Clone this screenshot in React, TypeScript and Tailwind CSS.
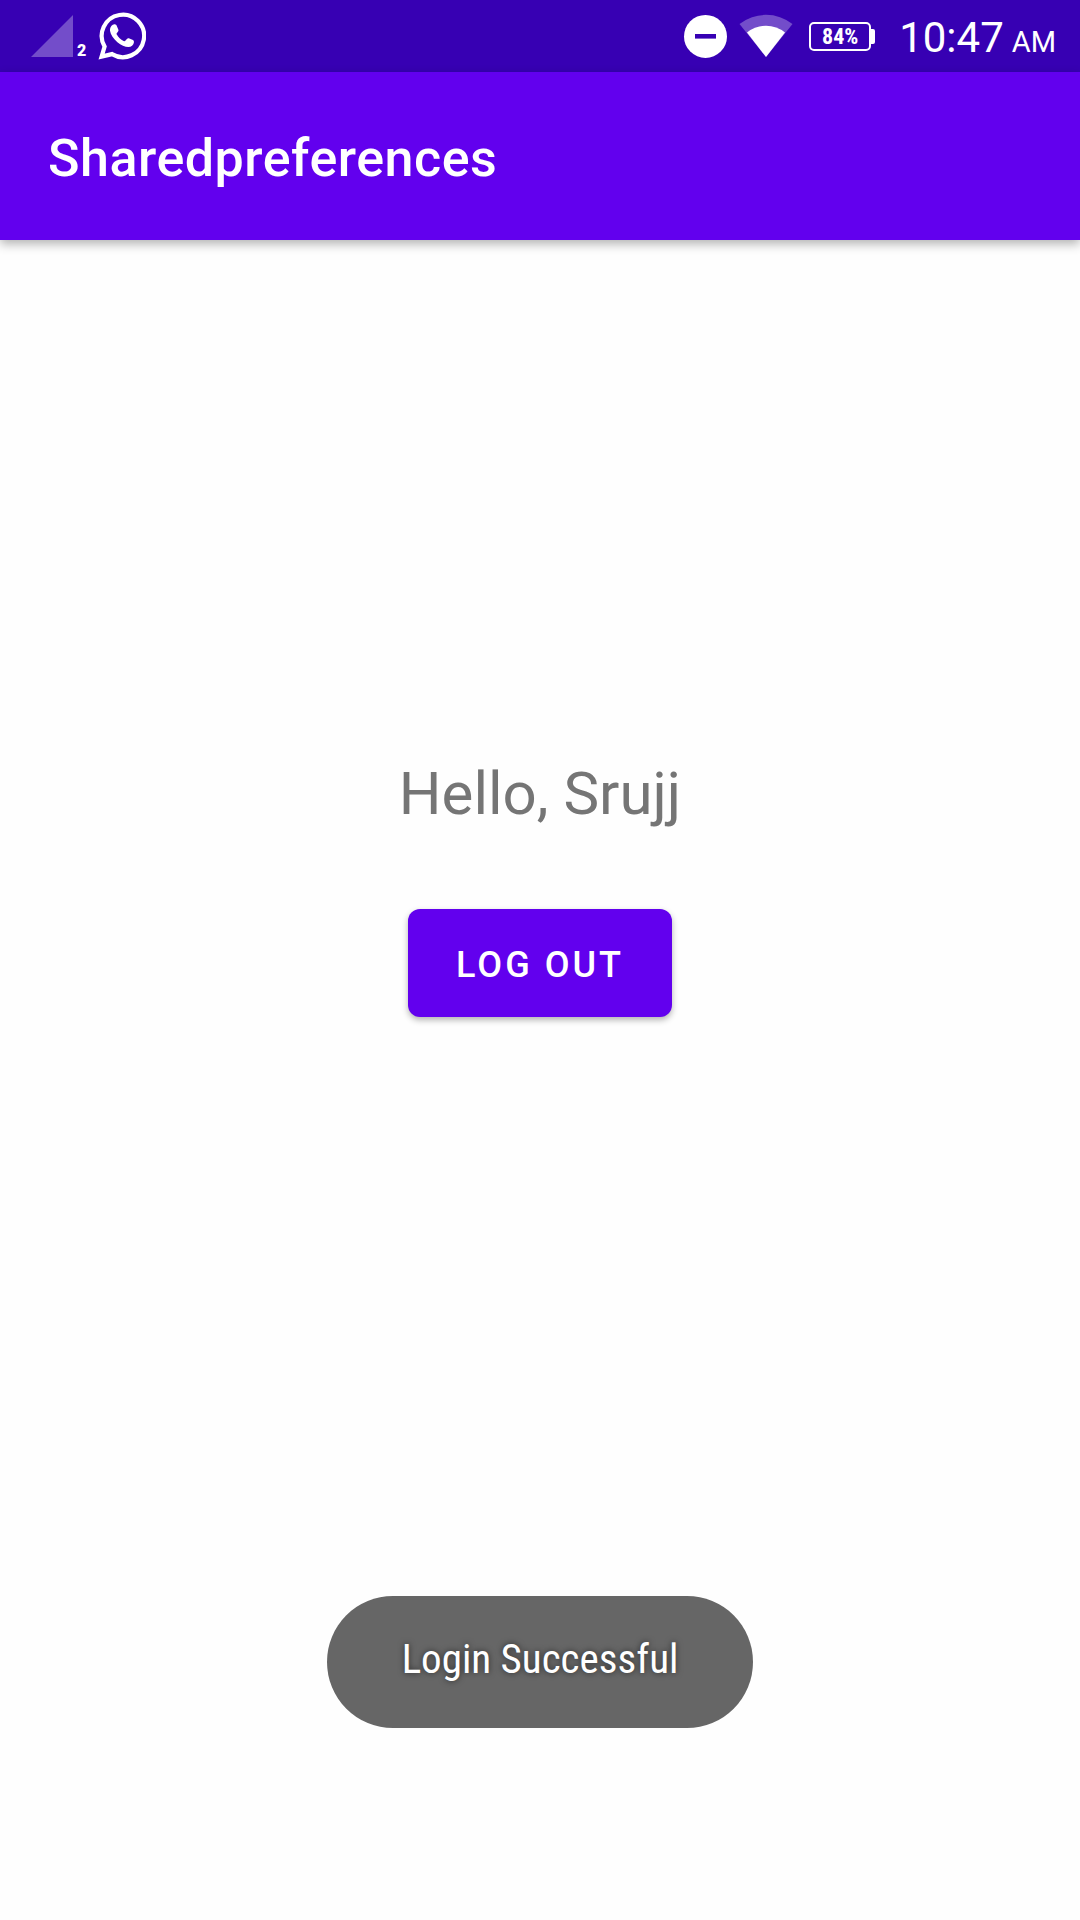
function SignalIcon() {
  return (
    <svg viewBox="0 0 42 42" className="h-[42px] w-[42px]" aria-hidden="true">
      <path d="M42 0V42H0Z" fill="#fff" fillOpacity="0.3" />
    </svg>
  );
}

function WhatsAppIcon() {
  return (
    <svg viewBox="0 0 48 48" className="h-12 w-12" aria-hidden="true">
      <path
        d="M3.6 44.6L6.6 34.6A21.2 21.2 0 1 1 14 42.1Z"
        fill="none"
        stroke="#fff"
        strokeWidth="4.2"
        strokeLinejoin="miter"
      />
      <path
        d="M14.8 12.8C12.9 14 11.7 16.2 12 18.8C12.6 23 15.6 27 19.4 30.2C23 33.2 27 35 30.4 35C33.2 34.9 35.6 33 35.9 30.4C36 29.3 35.8 28.6 35 28.1L31.4 26.4C30.3 25.9 29.6 26.1 28.9 26.9L27.3 28.8C26.8 29.3 26.3 29.4 25.6 29C22.6 27.5 20.3 25.2 18.8 22.5C18.4 21.8 18.5 21.4 19 20.9L20.2 19.3C20.6 18.7 20.6 18.2 20.3 17.5L18.7 13.8C18.3 12.8 17.8 12.4 16.9 12.3C16 12.2 15.4 12.4 14.8 12.8Z"
        fill="#fff"
      />
    </svg>
  );
}

function DoNotDisturbIcon() {
  return (
    <svg viewBox="0 0 44 44" className="h-11 w-11" aria-hidden="true">
      <circle cx="22.5" cy="22.4" r="21.5" fill="#fff" />
      <rect x="12" y="20" width="21" height="4.6" fill="#3700b3" />
    </svg>
  );
}

function WifiIcon() {
  return (
    <svg viewBox="0 0 54 44" className="h-11 w-[54px]" aria-hidden="true">
      <path d="M0.5 10A43 43 0 0 1 53.5 10L27 43Z" fill="#fff" fillOpacity="0.3" />
      <path d="M8 18.5A30 30 0 0 1 46 18.5L27 43Z" fill="#fff" />
    </svg>
  );
}

function Battery() {
  return (
    <div className="flex items-center" aria-label="Battery 84%">
      <div className="flex h-[29px] w-[62px] items-center justify-center rounded-[5px] border-2 border-white">
        <span className="pt-px font-['Roboto_Condensed',Roboto,sans-serif] text-[22px] leading-none font-bold">84%</span>
      </div>
      <div className="h-[15px] w-1 rounded-r-[2px] bg-white" />
    </div>
  );
}

function StatusBar() {
  return (
    <div className="flex h-[72px] items-center justify-between bg-[#3700b3] pr-6 pl-[31px] text-white">
      <div className="flex items-center">
        <SignalIcon />
        <span className="mt-[30px] ml-1 text-[16px] leading-none font-black">2</span>
        <span className="ml-3">
          <WhatsAppIcon />
        </span>
      </div>
      <div className="flex items-center">
        <DoNotDisturbIcon />
        <span className="ml-3">
          <WifiIcon />
        </span>
        <span className="ml-4">
          <Battery />
        </span>
        <span className="ml-6 flex items-baseline gap-2 pt-1 leading-none">
          <span className="text-[42px]">10:47</span>
          <span className="text-[29px]">AM</span>
        </span>
      </div>
    </div>
  );
}

export default function App() {
  return (
    <div className="flex min-h-screen flex-col bg-[#fefefe] font-[Roboto,sans-serif]">
      <StatusBar />
      <header className="flex h-[168px] items-center bg-[#6200ee] px-12 pt-[6px] text-white shadow-[0_4px_10px_rgba(0,0,0,0.3)]">
        <h1 className="text-[52px] leading-none font-medium tracking-[0.01em]">Sharedpreferences</h1>
      </header>
      <main className="flex grow flex-col items-center pt-[514px]">
        <p className="text-[60px] leading-[80px] text-[#757575]">Hello, Srujj</p>
        <button
          type="button"
          className="mt-[75px] h-[108px] rounded-xl bg-[#6200ee] px-12 pt-1 text-[36px] font-medium tracking-[3px] text-white shadow-[0_3px_6px_rgba(0,0,0,0.3)]"
        >
          LOG OUT
        </button>
      </main>
      <div className="pointer-events-none fixed inset-x-0 bottom-48 flex justify-center">
        <div
          role="status"
          className="flex h-[132px] items-center rounded-full bg-[#666] px-[75px] pb-1 font-['Roboto_Condensed',Roboto,sans-serif] text-[41px] text-white [text-shadow:0_0_6px_rgba(0,0,0,0.6)]"
        >
          Login Successful
        </div>
      </div>
    </div>
  );
}
